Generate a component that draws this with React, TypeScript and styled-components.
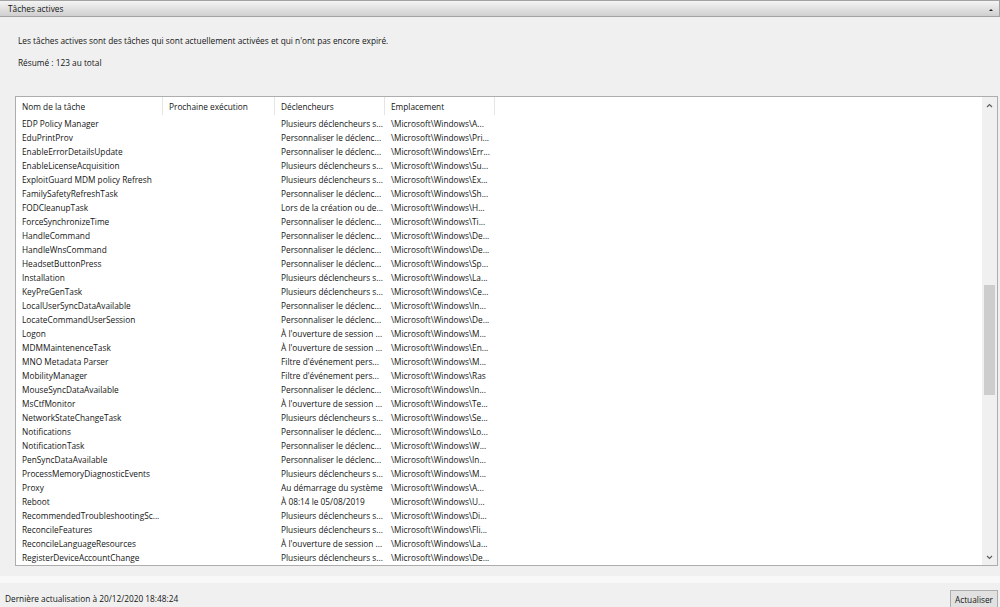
import styled, { createGlobalStyle } from 'styled-components';

const GlobalStyle = createGlobalStyle`
  html, body {
    margin: 0;
    padding: 0;
    background: #f0f0f0;
  }
  body {
    font-family: "Open Sans", "Noto Sans", sans-serif;
    color: #141414;
  }
`;

const Page = styled.div`
  width: 1000px;
  height: 607px;
  display: flex;
  flex-direction: column;
  overflow: hidden;
  font-size: 8.3px;
`;

const TitleBar = styled.div`
  height: 17px;
  display: flex;
  align-items: center;
  justify-content: space-between;
  padding: 0 6px 0 8px;
  border: 1px solid #a3a3a3;
  border-left: none;
  background: linear-gradient(#f4f4f4, #dedede 60%, #cfcfcf);
  box-sizing: border-box;
`;

const CollapseArrow = styled.span`
  width: 0;
  height: 0;
  border-left: 2px solid transparent;
  border-right: 2px solid transparent;
  border-bottom: 2px solid #222;
  margin-top: 2px;
`;

const Panel = styled.div`
  flex: 1;
  display: flex;
  flex-direction: column;
  padding: 18px 2px 10px 15px;
  min-height: 0;
`;

const Para = styled.p<{ $gap: number }>`
  margin: 0 0 ${p => p.$gap}px 3px;
  line-height: 11px;
`;

const TableBox = styled.div`
  height: 470px;
  display: flex;
  background: #fff;
  border: 1px solid #adadad;
  box-sizing: border-box;
`;

const Grid = styled.div`
  flex: 1;
  display: flex;
  flex-direction: column;
`;

const Row = styled.div<{ $head?: boolean }>`
  display: grid;
  grid-template-columns: 147px 112px 110px 110px 1fr;
  height: ${p => (p.$head ? 18 : 14)}px;
  align-items: center;
  margin-bottom: ${p => (p.$head ? 1 : 0)}px;
`;

const Cell = styled.div<{ $head?: boolean }>`
  height: 100%;
  display: flex;
  align-items: center;
  padding-left: ${p => (p.$head ? 6 : 6)}px;
  white-space: nowrap;
  overflow: hidden;
  border-right: ${p => (p.$head ? '1px solid #e5e5e5' : 'none')};
  box-sizing: border-box;
  &:last-child {
    border-right: none;
  }
`;

const ScrollBar = styled.div`
  width: 15px;
  background: #f0f0f0;
  display: flex;
  flex-direction: column;
  align-items: center;
`;

const ScrollArrow = styled.div`
  height: 16px;
  display: flex;
  align-items: center;
  justify-content: center;
`;

const Track = styled.div`
  flex: 1;
  width: 100%;
  display: flex;
  flex-direction: column;
  align-items: center;
`;

const Thumb = styled.div`
  width: 11px;
  background: #cdcdcd;
`;

const Divider = styled.div`
  height: 7px;
  background: #f8f8f8;
`;

const Footer = styled.div`
  height: 24px;
  display: flex;
  align-items: flex-end;
  justify-content: space-between;
  padding: 0 2px 0 5px;
  box-sizing: border-box;
`;

const Status = styled.span`
  padding-bottom: 3px;
`;

const Button = styled.button`
  font-family: inherit;
  font-size: inherit;
  color: #141414;
  height: 18px;
  padding: 0 4px;
  margin-bottom: -1px;
  background: #e1e1e1;
  border: 1px solid #adadad;
`;

const Chevron = ({ up }: { up?: boolean }) => (
  <svg width="7" height="5" viewBox="0 0 7 5">
    <path
      d={up ? 'M1 4 L3.5 1.5 L6 4' : 'M1 1 L3.5 3.5 L6 1'}
      fill="none"
      stroke="#606060"
      strokeWidth="1.2"
    />
  </svg>
);

const P = 'Plusieurs déclencheurs s...';
const C = 'Personnaliser le déclenc...';
const O = "À l'ouverture de session ...";
const F = "Filtre d'événement pers...";
const W = '\\Microsoft\\Windows\\';

const tasks: [string, string, string, string][] = [
  ['EDP Policy Manager', '', P, W + 'A...'],
  ['EduPrintProv', '', C, W + 'Pri...'],
  ['EnableErrorDetailsUpdate', '', C, W + 'Err...'],
  ['EnableLicenseAcquisition', '', P, W + 'Su...'],
  ['ExploitGuard MDM policy Refresh', '', P, W + 'Ex...'],
  ['FamilySafetyRefreshTask', '', C, W + 'Sh...'],
  ['FODCleanupTask', '', 'Lors de la création ou de...', W + 'H...'],
  ['ForceSynchronizeTime', '', C, W + 'Ti...'],
  ['HandleCommand', '', C, W + 'De...'],
  ['HandleWnsCommand', '', C, W + 'De...'],
  ['HeadsetButtonPress', '', C, W + 'Sp...'],
  ['Installation', '', P, W + 'La...'],
  ['KeyPreGenTask', '', P, W + 'Ce...'],
  ['LocalUserSyncDataAvailable', '', C, W + 'In...'],
  ['LocateCommandUserSession', '', C, W + 'De...'],
  ['Logon', '', O, W + 'M...'],
  ['MDMMaintenenceTask', '', O, W + 'En...'],
  ['MNO Metadata Parser', '', F, W + 'M...'],
  ['MobilityManager', '', F, W + 'Ras'],
  ['MouseSyncDataAvailable', '', C, W + 'In...'],
  ['MsCtfMonitor', '', O, W + 'Te...'],
  ['NetworkStateChangeTask', '', P, W + 'Se...'],
  ['Notifications', '', C, W + 'Lo...'],
  ['NotificationTask', '', C, W + 'W...'],
  ['PenSyncDataAvailable', '', C, W + 'In...'],
  ['ProcessMemoryDiagnosticEvents', '', P, W + 'M...'],
  ['Proxy', '', 'Au démarrage du système', W + 'A...'],
  ['Reboot', '', 'À 08:14 le 05/08/2019', W + 'U...'],
  ['RecommendedTroubleshootingSc...', '', P, W + 'Di...'],
  ['ReconcileFeatures', '', P, W + 'Fli...'],
  ['ReconcileLanguageResources', '', O, W + 'La...'],
  ['RegisterDeviceAccountChange', '', P, W + 'De...'],
];

const headers = ['Nom de la tâche', 'Prochaine exécution', 'Déclencheurs', 'Emplacement', ''];

export default function App() {
  return (
    <Page>
      <GlobalStyle />
      <TitleBar>
        <span>Tâches actives</span>
        <CollapseArrow />
      </TitleBar>
      <Panel>
        <Para $gap={11}>
          Les tâches actives sont des tâches qui sont actuellement activées et qui n'ont pas encore expiré.
        </Para>
        <Para $gap={28}>Résumé : 123 au total</Para>
        <TableBox>
          <Grid>
            <Row $head>
              {headers.map((h, i) => (
                <Cell $head key={i}>{h}</Cell>
              ))}
            </Row>
            {tasks.map(t => (
              <Row key={t[0]}>
                {t.map((v, i) => (
                  <Cell key={i}>{v}</Cell>
                ))}
                <Cell />
              </Row>
            ))}
          </Grid>
          <ScrollBar>
            <ScrollArrow><Chevron up /></ScrollArrow>
            <Track>
              <div style={{ height: 172 }} />
              <Thumb style={{ height: 110 }} />
            </Track>
            <ScrollArrow><Chevron /></ScrollArrow>
          </ScrollBar>
        </TableBox>
      </Panel>
      <Divider />
      <Footer>
        <Status>Dernière actualisation à 20/12/2020 18:48:24</Status>
        <Button>Actualiser</Button>
      </Footer>
    </Page>
  );
}
